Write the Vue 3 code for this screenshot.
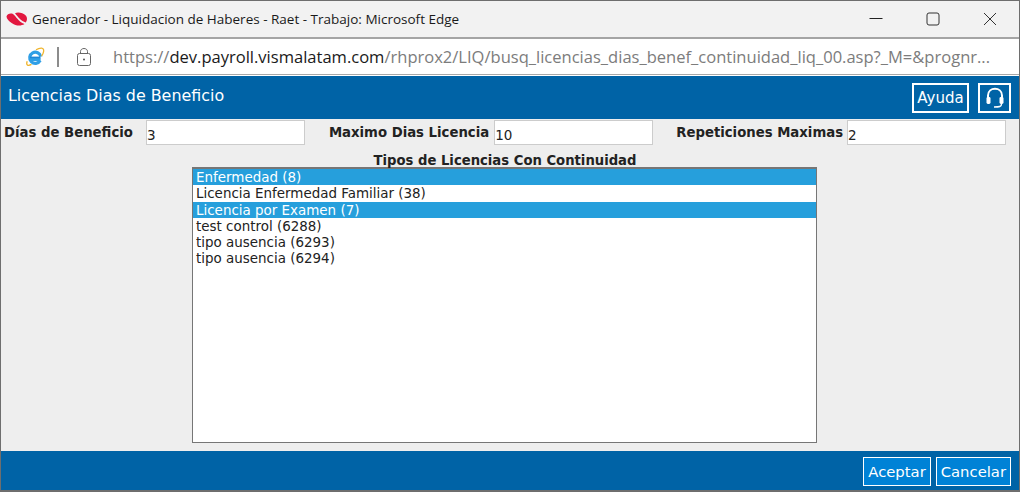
<script setup>
const licencias = [
  { id: 8, nombre: 'Enfermedad (8)', sel: true },
  { id: 38, nombre: 'Licencia Enfermedad Familiar (38)', sel: false },
  { id: 7, nombre: 'Licencia por Examen (7)', sel: true },
  { id: 6288, nombre: 'test control (6288)', sel: false },
  { id: 6293, nombre: 'tipo ausencia (6293)', sel: false },
  { id: 6294, nombre: 'tipo ausencia (6294)', sel: false }
]
</script>

<template>
  <div class="window">
    <div class="titlebar">
      <svg class="logo" width="22" height="14" viewBox="0 0 22 14">
        <path d="M0.5 4.5C1 2 4.5 0.8 7 2C10 4 12 9.5 18.5 12C15 14.2 10 14 6 11.2C3 9.2 0.5 7 0.5 4.5Z" fill="#e2173f" />
        <path d="M9 1.2C12 -0.2 17 0.8 20 3.8C21.5 5.8 21.2 8.6 19.8 10.4C15 9 12 5 9 1.2Z" fill="#e2173f" />
      </svg>
      <span class="title">Generador - Liquidacion de Haberes - Raet - Trabajo: Microsoft Edge</span>
      <div class="winbtns">
        <svg width="14" height="14" viewBox="0 0 14 14"><path d="M0.5 6.5H13.5" stroke="#222" fill="none" /></svg>
        <svg width="14" height="14" viewBox="0 0 14 14"><rect x="1" y="1" width="12" height="12" rx="2" stroke="#333" fill="none" /></svg>
        <svg width="14" height="14" viewBox="0 0 14 14"><path d="M1 1L13 13M13 1L1 13" stroke="#333" fill="none" /></svg>
      </div>
    </div>

    <div class="addressbar">
      <svg class="ie" width="20" height="20" viewBox="0 0 20 20">
        <path d="M15.6 12.5H5.6M15.2 13.5A5.6 5.6 0 1 1 15.8 9.6" fill="none" stroke="#2f9fe6" stroke-width="3.2" />
        <path d="M5 10.4H15.5" stroke="#1f86d6" stroke-width="1.6" />
        <path d="M2.2 14.2C0.8 17.8 2.6 19.4 6.5 17.4M11 2.8C15 0.4 19.4 0 18.6 4.6C18.2 6.6 17.4 8 16.6 9" fill="none" stroke="#efb52e" stroke-width="1.3" />
      </svg>
      <span class="divider"></span>
      <svg class="lock" width="16" height="20" viewBox="0 0 16 20">
        <rect x="1.5" y="6.5" width="13" height="12" rx="2" fill="none" stroke="#666" />
        <path d="M4.5 6.5V4.5C4.5 0.5 11.5 0.5 11.5 4.5V6.5" fill="none" stroke="#666" />
        <circle cx="8" cy="12.5" r="1" fill="#555" />
      </svg>
      <span class="url"><span class="muted">https://</span><span class="host">dev.payroll.vismalatam.com</span><span class="muted">/rhprox2/LIQ/busq_licencias_dias_benef_continuidad_liq_00.asp?_M=&amp;prognr...</span></span>
    </div>

    <div class="header">
      <span class="header-title">Licencias Dias de Beneficio</span>
      <div class="header-actions">
        <button class="btn-outline">Ayuda</button>
        <button class="btn-outline btn-icon">
          <svg width="20" height="22" viewBox="0 0 20 22">
            <path d="M3 11V8.5C3 -0.5 17 -0.5 17 8.5V11" fill="none" stroke="#fff" stroke-width="2" />
            <rect x="1.5" y="10" width="4" height="7" rx="1.4" fill="#fff" />
            <rect x="14.5" y="10" width="4" height="7" rx="1.4" fill="#fff" />
            <path d="M16.5 17C16.5 19.6 14.5 20 9 20" fill="none" stroke="#fff" stroke-width="1.4" />
          </svg>
        </button>
      </div>
    </div>

    <div class="content">
      <div class="fields">
        <label class="field field-1"><span>Días de Beneficio</span><input value="3" /></label>
        <label class="field field-2"><span>Maximo Dias Licencia</span><input value="10" /></label>
        <label class="field field-3"><span>Repeticiones Maximas</span><input value="2" /></label>
      </div>
      <div class="list-title">Tipos de Licencias Con Continuidad</div>
      <div class="list">
        <div v-for="l in licencias" :key="l.id" class="option" :class="{ selected: l.sel }">{{ l.nombre }}</div>
      </div>
    </div>

    <div class="footer">
      <button class="btn-fill">Aceptar</button>
      <button class="btn-fill">Cancelar</button>
    </div>
  </div>
</template>

<style>
html, body {
  margin: 0;
  background: #fff;
}
</style>

<style scoped>
.window {
  width: 1020px;
  height: 492px;
  box-sizing: border-box;
  border-top: 1px solid #6e6e6e;
  border-left: 1px solid #6e6e6e;
  border-right: 1px solid #6e6e6e;
  border-bottom: 2px solid #6e6e6e;
  display: flex;
  flex-direction: column;
  overflow: hidden;
  font-family: "DejaVu Sans", sans-serif;
}

.titlebar {
  height: 36px;
  flex: none;
  background: #f2f2f2;
  border-bottom: 2px solid #a5a5a5;
  display: flex;
  align-items: center;
  padding-left: 5px;
}
.logo {
  margin-right: 4px;
}
.title {
  font-family: "Open Sans", "Noto Sans", sans-serif;
  font-size: 13.5px;
  color: #1a1a1a;
}
.winbtns {
  margin-left: auto;
  display: flex;
  gap: 43px;
  padding-right: 22px;
}

.addressbar {
  height: 35px;
  flex: none;
  background: #fff;
  border-bottom: 1px solid #a8a8a8;
  display: flex;
  align-items: center;
  padding-left: 24px;
}
.divider {
  width: 2px;
  height: 20px;
  background: #8c8c8c;
  margin: 0 17px 0 12px;
}
.lock {
  margin-right: 21px;
}
.url {
  font-family: "Open Sans", "Noto Sans", sans-serif;
  font-size: 16.55px;
  white-space: nowrap;
}
.muted {
  color: #7c7c7c;
}
.host {
  color: #1a1a1a;
}

.header {
  height: 43px;
  flex: none;
  margin-top: 1px;
  background: #0063a6;
  display: flex;
  align-items: center;
  justify-content: space-between;
  padding: 0 8px 0 7px;
}
.header-title {
  font-size: 15.9px;
  color: #fff;
  margin-bottom: 5px;
}
.header-actions {
  display: flex;
  gap: 9px;
}
.btn-outline {
  height: 30px;
  box-sizing: border-box;
  background: #0063a6;
  border: 2px solid #fff;
  color: #fff;
  font-family: "DejaVu Sans", sans-serif;
  font-size: 15px;
  padding: 0;
  width: 57px;
}
.btn-icon {
  width: 33px;
  display: flex;
  align-items: center;
  justify-content: center;
}

.content {
  flex: 1;
  background: #eee;
  min-height: 0;
}
.fields {
  display: flex;
  padding-top: 1px;
  height: 27px;
}
.field {
  display: flex;
  align-items: flex-start;
  font-size: 13.25px;
  font-weight: bold;
  color: #222;
}
.field span {
  padding-top: 5px;
  white-space: nowrap;
}
.field input {
  box-sizing: border-box;
  width: 159px;
  height: 25px;
  border: 1px solid #ccc;
  background: #fff;
  font-family: "DejaVu Sans", sans-serif;
  font-size: 13.5px;
  color: #222;
  padding: 4px 0 0;
  outline: none;
}
.field-1 {
  margin-left: 3px;
}
.field-1 input {
  margin-left: 13px;
}
.field-2 {
  margin-left: 24px;
}
.field-2 input {
  margin-left: 5px;
}
.field-3 {
  margin-left: 23px;
}
.field-3 input {
  margin-left: 4px;
}

.list-title {
  text-align: center;
  font-size: 13.2px;
  font-weight: bold;
  color: #222;
  line-height: 14px;
  height: 13px;
  margin-top: 7px;
  padding-right: 10px;
}
.list {
  box-sizing: border-box;
  width: 625px;
  height: 276px;
  margin: 0 0 0 191px;
  background: #fff;
  border: 1px solid #767676;
  border-top-width: 2px;
}
.option {
  box-sizing: border-box;
  height: 16.25px;
  line-height: 16.25px;
  padding-top: 1px;
  font-size: 13.45px;
  color: #222;
  padding-left: 3px;
  white-space: nowrap;
}
.option.selected {
  background: #269fdc;
  color: #fff;
}

.footer {
  height: 39px;
  flex: none;
  background: #0063a6;
  display: flex;
  justify-content: flex-end;
  align-items: flex-start;
  gap: 5px;
  padding: 6px 8px 0 0;
  box-sizing: border-box;
}
.btn-fill {
  height: 29px;
  box-sizing: border-box;
  background: #0082d6;
  border: 1px solid #fff;
  color: #fff;
  font-family: "DejaVu Sans", sans-serif;
  font-size: 14.8px;
  padding: 0 4px;
}
</style>
